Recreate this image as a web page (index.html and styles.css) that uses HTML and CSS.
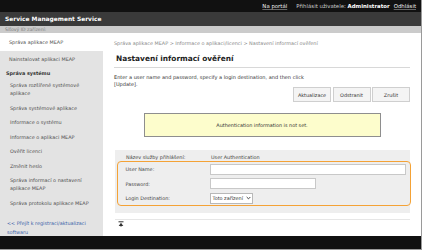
FILE: index.html
```html
<!DOCTYPE html>
<html lang="cs">
<head>
<meta charset="utf-8">
<title>Service Management Service</title>
<link rel="stylesheet" href="styles.css">
</head>
<body>
<div class="page">
  <div class="topbar">
    <a class="top-link">Na portál</a>
    <span class="top-user">Přihlásit uživatele: <b>Administrator</b></span>
    <a class="top-link">Odhlásit</a>
  </div>
  <div class="header">Service Management Service</div>
  <div class="strip">Síťový ID zařízení:</div>
  <div class="layout">
    <nav class="sidebar">
      <div class="nav-item active">Správa aplikace MEAP</div>
      <div class="nav-item second">Nainstalovat aplikaci MEAP</div>
      <div class="nav-head">Správa systému</div>
      <div class="nav-item">Správa rozšířené systémové<br>aplikace</div>
      <div class="nav-item">Správa systémové aplikace</div>
      <div class="nav-item">Informace o systému</div>
      <div class="nav-item">Informace o aplikaci MEAP</div>
      <div class="nav-item">Ověřit licenci</div>
      <div class="nav-item">Změnit heslo</div>
      <div class="nav-item">Správa informací o nastavení<br>aplikace MEAP</div>
      <div class="nav-item">Správa protokolu aplikace MEAP</div>
      <div class="nav-sep"></div>
      <a class="nav-link">&lt;&lt; Přejít k registraci/aktualizaci<br>softwaru</a>
    </nav>
    <main class="main">
      <div class="crumbs">Správa aplikace MEAP &gt; Informace o aplikaci/licenci &gt; Nastavení informací ověření</div>
      <h1 class="title">Nastavení informací ověření</h1>
      <p class="desc">Enter a user name and password, specify a login destination, and then click<br>[Update].</p>
      <div class="buttons">
        <button class="btn">Aktualizace</button>
        <button class="btn">Odstranit</button>
        <button class="btn">Zrušit</button>
      </div>
      <div class="notice">Authentication information is not set.</div>
      <div class="panel">
        <div class="panel-row">
          <span class="label">Název služby přihlášení:</span>
          <span class="value">User Authentication</span>
        </div>
        <div class="auth-box">
          <span class="label">User Name:</span>
          <span class="input wide"></span>
          <span class="label">Password:</span>
          <span class="input narrow"></span>
          <span class="label">Login Destination:</span>
          <span class="select">Toto zařízení<svg class="chev" viewBox="0 0 6 4" width="5" height="4"><path d="M0.8 0.8 L3 3 L5.2 0.8" fill="none" stroke="#333" stroke-width="1.1"/></svg></span>
        </div>
      </div>
      <div class="rule"></div>
      <div class="totop"><svg viewBox="0 0 6 6" width="6" height="6"><path d="M0.5 0.8 H5.5" stroke="#333" stroke-width="1"/><path d="M3 1.8 L5.3 5 H0.7 Z" fill="#333"/><path d="M3 3 V5.8" stroke="#333" stroke-width="0.8"/></svg></div>
    </main>
  </div>
  <div class="footer"></div>
</div>
</body>
</html>
```
FILE: styles.css
```css
* { box-sizing: border-box; }
html, body { margin: 0; padding: 0; }
body {
  width: 422px;
  height: 250px;
  overflow: hidden;
  background: #fff;
  font-family: "DejaVu Sans", Verdana, sans-serif;
  font-size: 4.9px;
  color: #444;
}
.page {
  width: 422px;
  height: 250px;
  display: flex;
  flex-direction: column;
  border-right: 1px solid #9a9a9a;
  border-bottom: 1px solid #9a9a9a;
}
.topbar {
  height: 12px;
  flex: none;
  background: #111;
  display: flex;
  justify-content: flex-end;
  align-items: center;
  gap: 9px;
  padding-right: 5px;
  color: #ccc;
  font-size: 5.4px;
  line-height: 8px;
}
.top-link {
  color: #eee;
  text-decoration: underline;
  text-decoration-color: #666;
}
.top-user b { font-weight: bold; color: #fff; }
.top-user { margin-right: -5px; }
.header {
  height: 14px;
  flex: none;
  background: #3a3a3a;
  color: #fff;
  font-weight: bold;
  font-size: 5.9px;
  line-height: 14px;
  padding-left: 5px;
}
.strip {
  height: 7px;
  flex: none;
  background: #cbcbcb;
  color: #808080;
  font-size: 4.6px;
  line-height: 7px;
  padding-left: 5px;
}
.layout {
  flex: 1;
  display: flex;
  min-height: 0;
}
.sidebar {
  width: 103px;
  flex: none;
  background: #e3e3e3;
  display: flex;
  flex-direction: column;
}
.nav-item {
  padding: 3.25px 10px;
  line-height: 8px;
  color: #505050;
}
.nav-item.active {
  background: #fff;
  padding: 5px 9px;
}
.nav-item.second { padding: 3.5px 9px; }
.nav-head {
  font-weight: bold;
  color: #333;
  line-height: 8px;
  padding: 3px 6px 1px;
}
.nav-sep {
  height: 1px;
  background: #c4c4c4;
  margin: 4.5px 0 4.5px;
}
.nav-link {
  color: #3b5fa8;
  line-height: 8.5px;
  padding: 0 7px;
}
.main {
  flex: 1;
  padding: 0 11px;
  display: flex;
  flex-direction: column;
}
.crumbs {
  color: #888;
  line-height: 8px;
  margin-top: 6px;
}
.title {
  margin: 7px 0 0;
  font-size: 7.4px;
  font-weight: bold;
  color: #222;
  line-height: 10px;
  padding: 0 2px 3px;
  border-bottom: 1px solid #d8d8d8;
}
.desc {
  margin: 6px 0 0;
  font-size: 5px;
  line-height: 6.5px;
  color: #333;
}
.buttons {
  display: flex;
  justify-content: flex-end;
  gap: 1.5px;
  margin-top: 0;
}
.btn {
  width: 38px;
  height: 15px;
  padding: 0;
  border: 1px solid #cfcfcf;
  background: #f4f4f4;
  font-family: inherit;
  font-size: 4.9px;
  color: #333;
}
.notice {
  align-self: center;
  width: 237px;
  height: 24px;
  margin-top: 11px;
  background: #fdfdcc;
  border: 1.5px solid #8e8e8e;
  display: flex;
  align-items: center;
  justify-content: center;
  color: #333;
}
.panel {
  margin: 13px 0 0 1px;
  background: #eeeeee;
  padding-bottom: 7px;
}
.panel-row {
  display: grid;
  grid-template-columns: 85px 1fr;
  padding: 3px 0 0 11px;
  line-height: 8px;
  color: #444;
}
.auth-box {
  margin: 0 -1px 0 2px;
  border: 1.5px solid #f4a236;
  border-radius: 4px;
  display: grid;
  grid-template-columns: 84px 1fr;
  align-items: center;
  row-gap: 3.5px;
  padding: 1.5px 4.5px 1px 7.5px;
}
.label { color: #444; }
.input {
  height: 11px;
  background: #fff;
  border: 1px solid #c8c8c8;
}
.input.narrow { width: 106px; }
.select {
  width: 43px;
  height: 11px;
  background: #fff;
  border: 1px solid #b8b8b8;
  display: flex;
  align-items: center;
  justify-content: space-between;
  padding: 0 1px 0 2px;
  color: #333;
}
.chev { display: block; }
.rule {
  height: 1px;
  background: #e6e6e6;
  margin: 6px 0 0 1px;
}
.totop {
  margin: 1px 0 0 4px;
  height: 6px;
}
.totop svg { display: block; }
.footer {
  height: 13px;
  flex: none;
  background: #111;
}
```
